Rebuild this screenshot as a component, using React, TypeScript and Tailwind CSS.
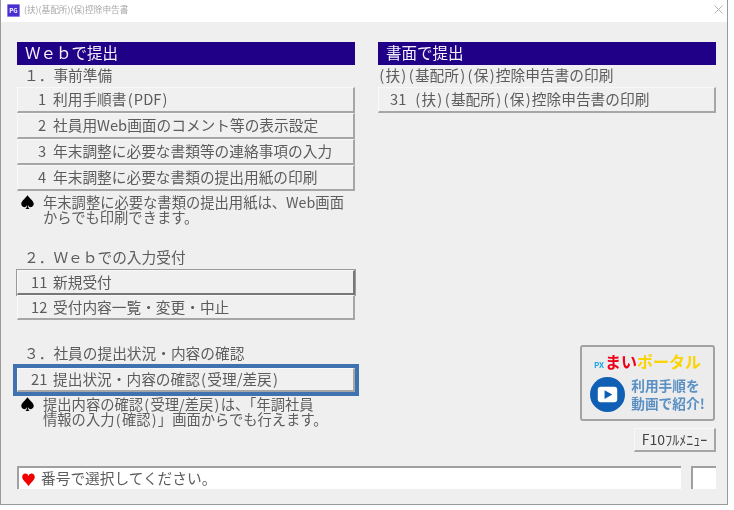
import { ReactNode } from "react";

const FONT = "font-['Noto_Sans_CJK_JP','Liberation_Sans',sans-serif]";

// parens in the reference are half an em wide, Noto's are narrower
function wide(text: string) {
  return text.split(/([()])/).map((part, i) =>
    part === "(" || part === ")" ? (
      <span key={i} className="inline-block w-[7.4px] text-center">
        {part}
      </span>
    ) : (
      part
    )
  );
}

function Band({ children }: { children: ReactNode }) {
  return (
    <div className="h-[23px] bg-[#1f0087] pl-2 text-[15.5px] leading-[20px] text-[#f4f1fb]">
      {children}
    </div>
  );
}

function MenuRow({
  num,
  label,
  numClass,
  dark,
  height = "h-[26px]",
}: {
  num: string;
  label: string;
  numClass: string;
  dark?: boolean;
  height?: string;
}) {
  return (
    <div
      className={`flex items-center border-t border-l border-t-[#f8f8f8] border-l-[#f8f8f8] border-r-2 border-b-2 bg-[#f0f0f0] text-[14.7px] text-[#5c5c5c] ${height} ${
        dark ? "border-r-[#777777] border-b-[#777777] outline outline-[#9a9a9a]" : "border-r-[#a6a6a6] border-b-[#a6a6a6]"
      }`}
    >
      <span className={`shrink-0 ${numClass}`}>{num}</span>
      <span className="whitespace-nowrap">{wide(label)}</span>
    </div>
  );
}

function Note({ children }: { children: ReactNode }) {
  return (
    <div className="flex text-[14.3px] leading-[15px] text-[#5c5c5c]">
      <span className="ml-[3px] w-[23px] shrink-0 text-[15px] text-black">♠</span>
      <div>{children}</div>
    </div>
  );
}

function PortalBanner() {
  return (
    <div className="mr-[1px] flex h-[76px] w-[135px] flex-col items-center rounded-[3px] border-2 border-[#a3a3a3] bg-[#ececec] pt-[3px]">
      <div className="flex items-baseline text-[16px] leading-[22px] font-bold">
        <span className="mr-[1px] text-[8px] text-[#1ca6e8]">PX</span>
        <span className="text-[#f00018]">まい</span>
        <span className="text-[#fbd400]">ポータル</span>
      </div>
      <div className="mt-[1px] flex items-center gap-[6px]">
        <svg width="35" height="35" viewBox="0 0 36 36">
          <circle cx="18" cy="18" r="18" fill="#0f5fb4" />
          <rect x="8" y="10" width="20" height="16" rx="3" fill="#ffffff" />
          <path d="M15 13.5 L23 18 L15 22.5 Z" fill="#0f5fb4" />
        </svg>
        <div className="mt-[-2px] text-[13.7px] leading-[18px] font-bold whitespace-nowrap text-[#5a90c4]">
          <div>利用手順を</div>
          <div>動画で紹介!</div>
        </div>
      </div>
    </div>
  );
}

export default function App() {
  return (
    <div className={`h-[510px] w-[734px] overflow-hidden bg-white blur-[0.35px] ${FONT}`}>
      <div className="flex h-[505px] w-[728px] flex-col border-r border-b border-l border-[#9a9a9a] bg-[#efefef]">
        {/* title bar */}
        <div className="flex h-[22px] shrink-0 items-start bg-white pt-[4px] pr-[4px] pl-[6px]">
          <div className="flex h-[13px] w-[13px] items-center justify-center rounded-[1px] border border-[#8f7be8] bg-[#4a2fd0] text-[6px] leading-none font-bold text-white">
            PG
          </div>
          <span className="ml-[4px] text-[8.7px] leading-[12px] text-[#a8a8a8]">(扶)(基配所)(保)控除申告書</span>
          <svg className="mt-[1px] ml-auto" width="9" height="9" viewBox="0 0 9 9">
            <path d="M0.5 0.5 L8.5 8.5 M8.5 0.5 L0.5 8.5" stroke="#b5b5b5" strokeWidth="1" />
          </svg>
        </div>

        <div className="flex flex-1 flex-col pt-[20px] pr-[11px] pb-[15px] pl-[16px]">
          <div className="flex flex-1 gap-[23px]">
            {/* left column */}
            <div className="flex w-[338px] flex-col">
              <Band>Ｗｅｂで提出</Band>
              <div className="h-[22px] pl-[7px] text-[14.7px] leading-[20px] text-[#5c5c5c]">１．事前準備</div>
              <div className="flex flex-col">
                <MenuRow num="1" label="利用手順書(PDF)" numClass="w-[35px] pl-[20px]" />
                <MenuRow num="2" label="社員用Web画面のコメント等の表示設定" numClass="w-[35px] pl-[20px]" />
                <MenuRow num="3" label="年末調整に必要な書類等の連絡事項の入力" numClass="w-[35px] pl-[20px]" />
                <MenuRow num="4" label="年末調整に必要な書類の提出用紙の印刷" numClass="w-[35px] pl-[20px]" />
              </div>
              <div className="mt-[3px]">
                <Note>
                  年末調整に必要な書類の提出用紙は、Web画面
                  <br />
                  からでも印刷できます。
                </Note>
              </div>
              <div className="mt-[22px] h-[24px] pl-[7px] text-[14.7px] leading-[22px] text-[#5c5c5c]">
                ２．Ｗｅｂでの入力受付
              </div>
              <MenuRow num="11" label="新規受付" numClass="w-[35px] pl-[13px]" height="h-[25px]" dark />
              <MenuRow num="12" label="受付内容一覧・変更・中止" numClass="w-[35px] pl-[13px]" height="h-[25px]" />
              <div className="mt-[22px] h-[22px] pl-[7px] text-[14.7px] leading-[22px] text-[#5c5c5c]">
                ３．社員の提出状況・内容の確認
              </div>
              <div className="-mx-[4px] border-[4px] border-[#3f72af]">
                <MenuRow num="21" label="提出状況・内容の確認(受理/差戻)" numClass="w-[35px] pl-[13px]" height="h-[24px]" />
              </div>
              <div>
                <Note>
                  {wide("提出内容の確認(受理/差戻)は、「年調社員")}
                  <br />
                  {wide("情報の入力(確認)」画面からでも行えます。")}
                </Note>
              </div>
            </div>

            {/* right column */}
            <div className="flex w-[338px] flex-col">
              <Band>書面で提出</Band>
              <div className="h-[22px] text-[14.7px] leading-[20px] whitespace-nowrap text-[#5c5c5c]">
                {wide("(扶)(基配所)(保)控除申告書の印刷")}
              </div>
              <MenuRow num="31" label="(扶)(基配所)(保)控除申告書の印刷" numClass="w-[35px] pl-[11px]" />
              <div className="mt-auto flex flex-col items-end">
                <PortalBanner />
                <div className="mt-[7px] mb-[14px] flex h-[24px] w-[82px] items-center justify-center border-t border-l border-t-[#f8f8f8] border-l-[#f8f8f8] border-r-2 border-b-2 border-r-[#a6a6a6] border-b-[#a6a6a6] text-[14px] whitespace-nowrap text-[#444444]">
                  F10ﾌﾙﾒﾆｭｰ
                </div>
              </div>
            </div>
          </div>

          {/* status line */}
          <div className="flex gap-[10px]">
            <div className="flex h-[23px] flex-1 items-center border-t-2 border-l-2 border-[#a0a0a0] bg-white pl-[2px] text-[14.7px] text-[#5c5c5c]">
              <span className="w-[20px] text-[15px] leading-none text-[#f00000]">♥</span>
              番号で選択してください。
            </div>
            <div className="h-[23px] w-[25px] border-t-2 border-l-2 border-[#a0a0a0] bg-white" />
          </div>
        </div>
      </div>
    </div>
  );
}
